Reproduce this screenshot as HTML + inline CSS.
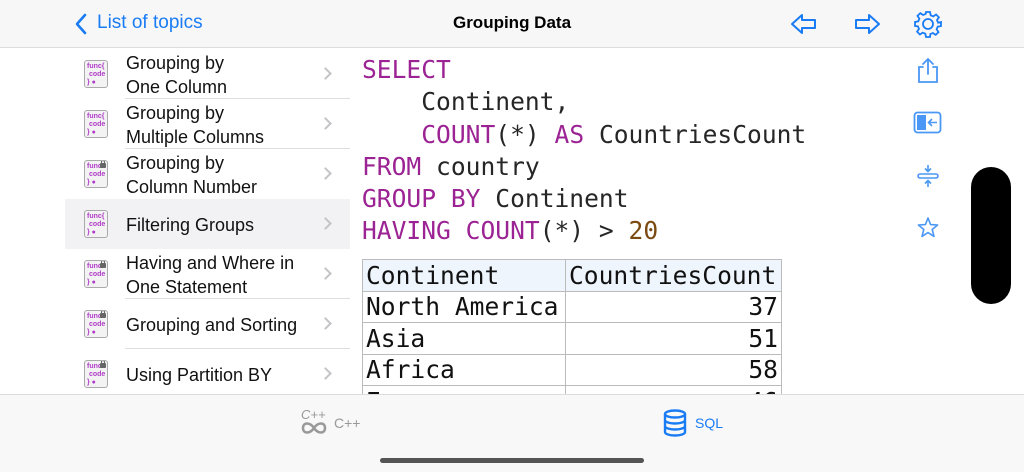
<!DOCTYPE html>
<html><head><meta charset="utf-8"><style>
*{margin:0;padding:0;box-sizing:border-box}
body{width:1024px;height:472px;overflow:hidden;background:#fff;font-family:"Liberation Sans",sans-serif;position:relative;color:#000}
.hdr{position:absolute;left:0;top:0;width:1024px;height:48px;background:#f7f7f7;border-bottom:1px solid #dcdcdc}
.title{position:absolute;left:0;width:1024px;top:13px;text-align:center;font-weight:bold;font-size:17px}
.back{position:absolute;left:97px;top:12px;font-size:19px;color:#1a7cf5}
.item{position:absolute;left:65px;width:285px;height:50px}
.item.sel{background:#f2f2f4}
.item .t{position:absolute;left:61px;font-size:18px;line-height:24px;color:#111}
.item .sep{position:absolute;left:60px;right:0;bottom:0;height:1px;background:#dedede}
.item .chev{position:absolute;right:20px;top:20px;width:9px;height:9px;border-right:2px solid #c4c4c8;border-top:2px solid #c4c4c8;transform:rotate(45deg)}
.ic{position:absolute;left:19px;top:11px;width:24px;height:28px;background:#f3f3f3;border:1px solid #aaa;border-radius:3px;font-size:7px;line-height:8px;color:#b03cc7;text-align:left;padding:2px 0 0 2px;font-weight:bold;white-space:nowrap;overflow:hidden}
.lk{position:absolute;right:1px;top:2px;width:6px;height:5px;background:#666;border-radius:1px}
.lk:before{content:"";position:absolute;left:1px;top:-3px;width:2px;height:3px;border:1px solid #666;border-bottom:none;border-radius:2px 2px 0 0}
.code{position:absolute;left:362px;top:54px;font-family:"DejaVu Sans Mono",monospace;font-size:24.6px;line-height:32.3px;color:#262626;white-space:pre}
.k{color:#9b2393}.n{color:#7b4a12}
table{position:absolute;left:362px;top:259px;border-collapse:collapse;font-family:"DejaVu Sans Mono",monospace;font-size:24.6px;color:#111}
td{border:1px solid #bbb;height:31.5px;line-height:29px;padding:0 3px;white-space:nowrap}
tr.h td{background:#eef5fd}
.bot{position:absolute;left:0;top:394px;width:1024px;height:78px;background:#f8f8f8;border-top:1px solid #dcdcdc}
</style></head><body>
<div class="hdr">
<svg style="position:absolute;left:74px;top:13px" width="14" height="22"><path d="M11 2 L3 11 L11 20" fill="none" stroke="#1a7cf5" stroke-width="2.6" stroke-linecap="round" stroke-linejoin="round"/></svg>
<div class="back">List of topics</div>
<div class="title">Grouping Data</div>
<svg style="position:absolute;left:790px;top:12px" width="28" height="24"><path d="M2 12 L12 3 L12 8 L25 8 L25 16 L12 16 L12 21 Z" fill="none" stroke="#1a7cf5" stroke-width="2" stroke-linejoin="round"/></svg>
<svg style="position:absolute;left:853px;top:12px" width="28" height="24"><path d="M26 12 L16 3 L16 8 L3 8 L3 16 L16 16 L16 21 Z" fill="none" stroke="#1a7cf5" stroke-width="2" stroke-linejoin="round"/></svg>
<svg style="position:absolute;left:914px;top:10px" width="28" height="28" viewBox="0 0 28 28"><g fill="none" stroke="#1a7cf5" stroke-width="1.8"><circle cx="14" cy="14" r="5"/><path d="M12 2h4l.7 3.3 2.6 1.1 2.8-1.9 2.8 2.8-1.9 2.8 1.1 2.6L27 12v4l-3.3.7-1.1 2.6 1.9 2.8-2.8 2.8-2.8-1.9-2.6 1.1L16 27h-4l-.7-3.3-2.6-1.1-2.8 1.9-2.8-2.8 1.9-2.8-1.1-2.6L1 16v-4l3.3-.7 1.1-2.6-1.9-2.8 2.8-2.8 2.8 1.9 2.6-1.1z"/></g></svg>
</div>

<div class="item" style="top:49px"><div class="ic">func{<br>&nbsp;code<br>} ●</div><div class="t" style="top:2px">Grouping by<br>One Column</div><div class="chev"></div><div class="sep"></div></div>
<div class="item" style="top:99px"><div class="ic">func{<br>&nbsp;code<br>} ●</div><div class="t" style="top:2px">Grouping by<br>Multiple Columns</div><div class="chev"></div><div class="sep"></div></div>
<div class="item" style="top:149px"><div class="ic">func<span class="lk"></span><br>&nbsp;code<br>} ●</div><div class="t" style="top:2px">Grouping by<br>Column Number</div><div class="chev"></div></div>
<div class="item sel" style="top:199px"><div class="ic">func{<br>&nbsp;code<br>} ●</div><div class="t" style="top:14px">Filtering Groups</div><div class="chev"></div></div>
<div class="item" style="top:249px"><div class="ic">func<span class="lk"></span><br>&nbsp;code<br>} ●</div><div class="t" style="top:2px">Having and Where in<br>One Statement</div><div class="chev"></div><div class="sep"></div></div>
<div class="item" style="top:299px"><div class="ic">func<span class="lk"></span><br>&nbsp;code<br>} ●</div><div class="t" style="top:14px">Grouping and Sorting</div><div class="chev"></div><div class="sep"></div></div>
<div class="item" style="top:349px"><div class="ic">func<span class="lk"></span><br>&nbsp;code<br>} ●</div><div class="t" style="top:14px">Using Partition BY</div><div class="chev"></div></div>

<div class="code"><span class="k">SELECT</span>
    Continent,
    <span class="k">COUNT</span>(*) <span class="k">AS</span> CountriesCount
<span class="k">FROM</span> country
<span class="k">GROUP BY</span> Continent
<span class="k">HAVING COUNT</span>(*) &gt; <span class="n">20</span></div>

<table>
<tr class="h"><td style="width:203px">Continent</td><td style="width:216px">CountriesCount</td></tr>
<tr><td>North America</td><td style="text-align:right">37</td></tr>
<tr><td>Asia</td><td style="text-align:right">51</td></tr>
<tr><td>Africa</td><td style="text-align:right">58</td></tr>
<tr><td>Europe</td><td style="text-align:right">46</td></tr>
</table>

<svg style="position:absolute;left:914px;top:56px" width="28" height="28"><g fill="none" stroke="#4a97f5" stroke-width="1.8" stroke-linecap="round"><path d="M9 11H5v15h18V11h-4"/><path d="M14 18V3M9 8l5-5 5 5"/></g></svg>
<svg style="position:absolute;left:913px;top:111px" width="30" height="24"><rect x="1.5" y="1.5" width="26" height="20" rx="3" fill="none" stroke="#4a97f5" stroke-width="1.8"/><rect x="4" y="4" width="9" height="15" fill="#4a97f5"/><path d="M24 11.5h-8M19 8l-3.5 3.5L19 15" fill="none" stroke="#4a97f5" stroke-width="1.6"/></svg>
<svg style="position:absolute;left:916px;top:164px" width="24" height="24"><g fill="none" stroke="#4a97f5" stroke-width="1.6"><rect x="2" y="10" width="20" height="4" rx="2"/><path d="M12 1v6M9 4.5l3 3 3-3M12 23v-6M9 19.5l3-3 3 3"/></g></svg>
<svg style="position:absolute;left:916px;top:216px" width="24" height="24"><path d="M12 2l2.6 6.6 7 .4-5.4 4.5 1.8 6.9L12 16.6 6 20.4l1.8-6.9L2.4 9l7-.4z" fill="none" stroke="#4a97f5" stroke-width="1.6" stroke-linejoin="round"/></svg>

<div style="position:absolute;left:971px;top:167px;width:40px;height:137px;background:#000;border-radius:20px"></div>

<div class="bot">
<div style="position:absolute;left:301px;top:12px;font-size:13px;color:#999;font-style:italic">C++</div>
<svg style="position:absolute;left:301px;top:22px" width="26" height="22"><path d="M13 11c-4-6-11-6-11 0s7 6 11 0c4-6 11-6 11 0s-7 6-11 0z" fill="none" stroke="#999" stroke-width="2.5"/></svg>
<div style="position:absolute;left:334px;top:20px;font-size:14px;color:#999">C++</div>
<svg style="position:absolute;left:663px;top:14px" width="24" height="28"><g fill="none" stroke="#1a7cf5" stroke-width="2.4"><ellipse cx="12" cy="5" rx="10" ry="3.5"/><path d="M2 5v18c0 2 4.5 3.5 10 3.5s10-1.5 10-3.5V5M2 11c0 2 4.5 3.5 10 3.5S22 13 22 11M2 17c0 2 4.5 3.5 10 3.5S22 19 22 17"/></g></svg>
<div style="position:absolute;left:695px;top:20px;font-size:14px;color:#1a7cf5">SQL</div>
<div style="position:absolute;left:380px;top:63px;width:264px;height:5px;border-radius:3px;background:#555"></div>
</div>
</body></html>
